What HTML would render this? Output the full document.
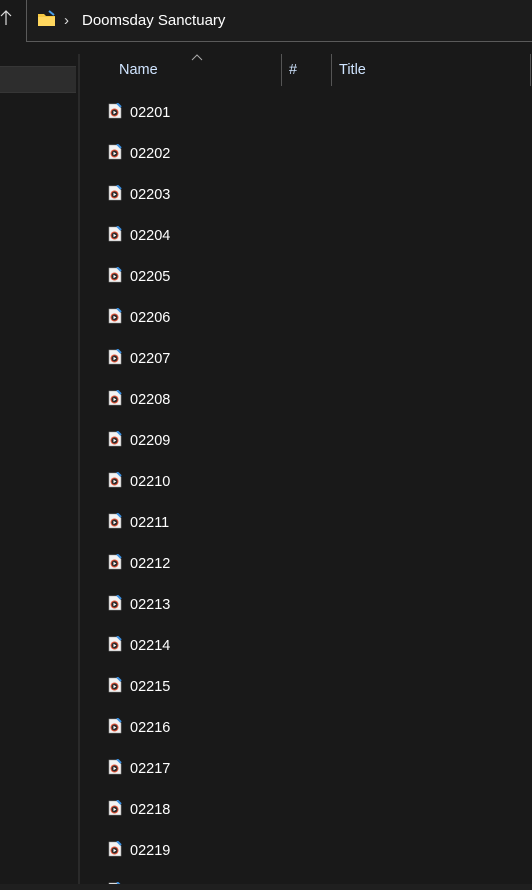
<!DOCTYPE html>
<html><head><meta charset="utf-8"><style>
html,body{margin:0;width:532px;height:890px;overflow:hidden}
body{background:#191919;position:relative;font-family:"Segoe UI","Liberation Sans",sans-serif;color:#fff}
.abs{position:absolute}
.row{position:absolute;left:108px;height:20px}
.row span{position:absolute;left:22px;top:1px;font-size:14.5px;line-height:20px;color:#fff}
</style></head><body>
<div class="abs" style="left:26px;top:-1px;width:520px;height:43px;border:1px solid #5a5a5a;box-sizing:border-box;background:#1c1c1c"></div>
<svg class="abs" style="left:0;top:10px" width="14" height="16"><path d="M1 6 L6 1 L11 6 M6 1 V15" stroke="#ddd" fill="none" stroke-width="1.2"/></svg>
<svg class="abs" style="left:37px;top:10px" width="20" height="18"><path d="M1 4 h6 l2 2 h9 v10 h-17z" fill="#f5c842"/><path d="M1 7 h17 v9 h-17z" fill="#ffd75e"/><path d="M12 1 l5 4" stroke="#4a9ee8" stroke-width="2"/></svg>
<div class="abs" style="left:64px;top:12px;font-size:15px;color:#ddd">›</div>
<div class="abs" style="left:82px;top:12px;font-size:15px;color:#fff">Doomsday Sanctuary</div>
<div class="abs" style="left:0;top:66px;width:76px;height:27px;background:#2d2d2d;border-top:1px solid #363636;border-bottom:1px solid #363636;box-sizing:border-box"></div>
<div class="abs" style="left:78px;top:54px;width:2px;height:830px;background:#2a2a2a"></div>
<svg class="abs" style="left:191px;top:54px" width="12" height="8"><path d="M1 6 L6 1 L11 6" stroke="#aaa" fill="none"/></svg>
<div class="abs" style="left:119px;top:62px;font-size:14.5px;color:#cfe4ff">Name</div>
<div class="abs" style="left:281px;top:54px;width:1px;height:32px;background:#555"></div>
<div class="abs" style="left:289px;top:62px;font-size:14.5px;color:#cfe4ff">#</div>
<div class="abs" style="left:331px;top:54px;width:1px;height:32px;background:#555"></div>
<div class="abs" style="left:339px;top:62px;font-size:14.5px;color:#cfe4ff">Title</div>
<div class="abs" style="left:530px;top:54px;width:1px;height:32px;background:#555"></div>
<div id="list" class="abs" style="left:0;top:0;width:532px;height:884px;overflow:hidden"></div>
<div class="abs" style="left:0;top:884px;width:532px;height:6px;background:#1f1f1f"></div>
<script>
var h='';for(var i=0;i<20;i++){var y=102+i*41;var n='';if(i<9)n='0220'+(i+1);else if(i<19)n='022'+(i+1);
h+='<div class="row" style="top:'+y+'px"><svg width="14" height="16" style="position:absolute;left:0;top:1px"><path d="M1 1 h8 l4 4 v10 h-12z" fill="#f2f2f2" stroke="#999" stroke-width=".6"/><path d="M9 0 l4 4" stroke="#3a8ee0" stroke-width="2"/><circle cx="6.5" cy="9.5" r="4" fill="#e8563a"/><circle cx="6.5" cy="9.5" r="3" fill="#2a2a2a"/><path d="M5.5 7.8 v3.4 l2.8-1.7z" fill="#fff"/></svg>'+(n?'<span>'+n+'</span>':'')+'</div>';}
document.getElementById('list').innerHTML=h;
</script>
</body></html>
